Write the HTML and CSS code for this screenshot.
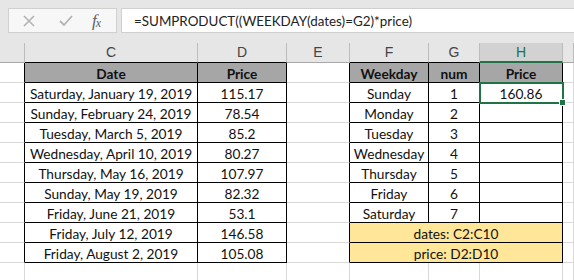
FILE: index.html
```html
<!DOCTYPE html>
<html lang="en">
<head>
    <meta charset="UTF-8">
    <title>SUMPRODUCT weekday</title>
    <link rel="stylesheet" href="styles.css">
</head>
<body>
    <div class="toolbar">
        <div class="buttons">
            <svg class="icon" width="14" height="14" viewBox="0 0 14 14">
                <path d="M2 2 L12 12 M12 2 L2 12" stroke="#b4b4b4" stroke-width="1.6" fill="none"/>
            </svg>
            <svg class="icon" width="16" height="14" viewBox="0 0 16 14">
                <path d="M2 7 L6 11 L14 2" stroke="#b4b4b4" stroke-width="1.8" fill="none"/>
            </svg>
            <span class="fx">f<sub>x</sub></span>
        </div>
        <div class="formula">=SUMPRODUCT((WEEKDAY(dates)=G2)*price)</div>
    </div>

    <div class="sheet" id="sheet"></div>

    <script>
        const dates = [
            ['Saturday, January 19, 2019', '115.17'],
            ['Sunday, February 24, 2019', '78.54'],
            ['Tuesday, March 5, 2019', '85.2'],
            ['Wednesday, April 10, 2019', '80.27'],
            ['Thursday, May 16, 2019', '107.97'],
            ['Sunday, May 19, 2019', '82.32'],
            ['Friday, June 21, 2019', '53.1'],
            ['Friday, July 12, 2019', '146.58'],
            ['Friday, August 2, 2019', '105.08']
        ];
        const days = ['Sunday', 'Monday', 'Tuesday', 'Wednesday', 'Thursday', 'Friday', 'Saturday'];

        const sheet = document.getElementById('sheet');

        function cell(text, cls) {
            const div = document.createElement('div');
            div.className = 'cell' + (cls ? ' ' + cls : '');
            div.textContent = text || '';
            sheet.appendChild(div);
            return div;
        }

        // column letters
        ['', 'C', 'D', 'E', 'F', 'G', 'H', ''].forEach(l => {
            let cls = 'col-head';
            if (l === 'H') cls += ' col-active';
            else if (['C', 'D', 'F', 'G'].includes(l)) cls += ' over-table';
            cell(l, cls);
        });

        for (let r = 0; r < 11; r++) {
            const inTable = r < 10;
            cell('', inTable ? 'edge' : '');

            if (r === 0) {
                cell('Date', 'box head');
                cell('Price', 'box head');
            } else if (r <= 9) {
                cell(dates[r - 1][0], 'box');
                cell(dates[r - 1][1], 'box');
            } else {
                cell('');
                cell('');
            }

            cell('', inTable ? 'edge' : '');

            if (r === 0) {
                cell('Weekday', 'box head');
                cell('num', 'box head');
                cell('Price', 'box head');
            } else if (r <= 7) {
                cell(days[r - 1], 'box');
                cell(String(r), 'box');
                cell(r === 1 ? '160.86' : '', r === 1 ? 'box selected' : 'box');
            } else if (r === 8) {
                cell('dates: C2:C10', 'box note');
            } else if (r === 9) {
                cell('price: D2:D10', 'box note');
            } else {
                cell('');
                cell('');
                cell('');
            }

            cell('');
        }
    </script>
</body>
</html>
```

FILE: styles.css
```css
body {
    margin: 0;
    width: 574px;
    height: 280px;
    overflow: hidden;
    background-color: #fff;
    font-family: "Lato", "Liberation Sans", sans-serif;
    color: #000;
}

.toolbar {
    height: 43px;
    background-color: #e6e6e6;
    display: flex;
    align-items: flex-start;
    padding: 8px 0 0 8px;
    box-sizing: border-box;
    gap: 4px;
}

.buttons {
    width: 109px;
    height: 25px;
    box-sizing: border-box;
    background-color: #f7f7f7;
    border: 1px solid #d0d0d0;
    display: flex;
    align-items: center;
    padding-left: 13px;
    gap: 22px;
}

.icon {
    display: block;
}

.fx {
    font-family: "Liberation Serif", serif;
    font-style: italic;
    font-size: 17px;
    color: #606060;
    margin-left: -4px;
}

.fx sub {
    font-size: 12px;
    vertical-align: -1px;
    margin-left: -1px;
}

.formula {
    flex: 1;
    height: 25px;
    box-sizing: border-box;
    background-color: #fff;
    border: 1px solid #d0d0d0;
    border-right: none;
    padding-left: 12px;
    font-size: 13.4px;
    line-height: 24px;
    color: #222;
}

.sheet {
    display: grid;
    grid-template-columns: 25px 173px 89px 63px 79px 51px 83px 1fr;
    grid-auto-rows: 20px;
}

.cell {
    box-sizing: border-box;
    border-right: 1px solid #d9d9d9;
    border-bottom: 1px solid #d9d9d9;
    font-size: 13.7px;
    line-height: 19px;
    padding-top: 1px;
    text-align: center;
    white-space: nowrap;
    overflow: hidden;
    color: #111;
}

.col-head {
    background-color: #e6e6e6;
    border-right-color: #bcbcbc;
    border-bottom-color: #a8a8a8;
    color: #444;
    font-family: "Liberation Sans", sans-serif;
    font-size: 14px;
    padding-top: 0;
}

.col-head.over-table {
    border-bottom-color: #000;
}

.col-active {
    background-color: #d2d2d2;
    color: #217346;
    border-bottom: 2px solid #217346;
    line-height: 18px;
}

.edge {
    border-right-color: #000;
}

.box {
    border-right-color: #000;
    border-bottom-color: #000;
}

.head {
    background-color: #a6a6a6;
    font-weight: bold;
}

.note {
    grid-column: span 3;
    background-color: #ffe699;
}

.selected {
    position: relative;
    overflow: visible;
    outline: 2px solid #217346;
    outline-offset: -1px;
}

.selected::after {
    content: "";
    position: absolute;
    right: -4px;
    bottom: -4px;
    width: 5px;
    height: 5px;
    background-color: #217346;
    border: 1px solid #fff;
}
```
